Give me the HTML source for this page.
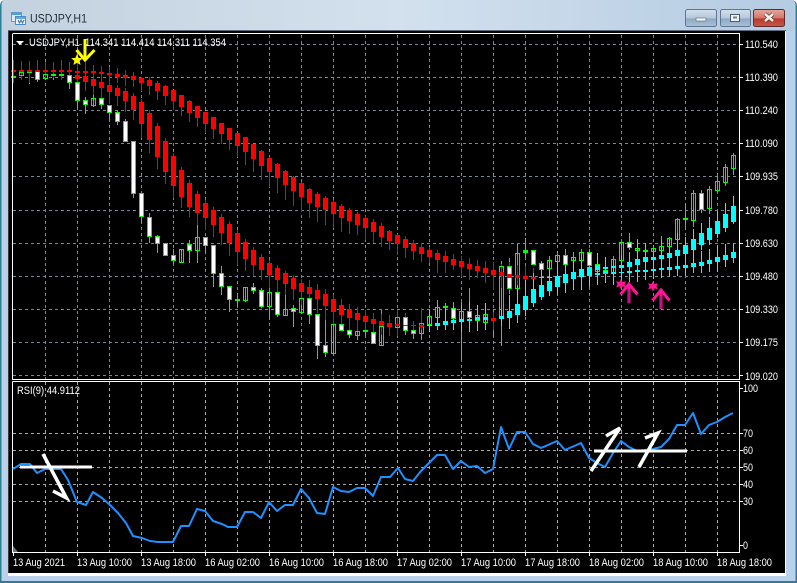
<!DOCTYPE html>
<html>
<head>
<meta charset="utf-8">
<title>USDJPY,H1</title>
<style>
html,body{margin:0;padding:0;background:#fff;width:797px;height:583px;overflow:hidden}
svg{display:block}
text{font-family:"Liberation Sans",sans-serif;font-size:11px;fill:#fff}
.c{shape-rendering:crispEdges;fill:none}
</style>
</head>
<body>
<svg width="797" height="583" viewBox="0 0 797 583" xmlns="http://www.w3.org/2000/svg">
<defs>
<linearGradient id="tb" x1="0" y1="0" x2="1" y2="0"><stop offset="0" stop-color="#c4d2df"/><stop offset=".5" stop-color="#d3e1ee"/><stop offset="1" stop-color="#b4cbe2"/></linearGradient>
<linearGradient id="bb" x1="0" y1="0" x2="0" y2="1"><stop offset="0" stop-color="#d3e0ec"/><stop offset=".5" stop-color="#b5c8db"/><stop offset=".55" stop-color="#8fa9c5"/><stop offset="1" stop-color="#a9c2da"/></linearGradient>
<linearGradient id="br" x1="0" y1="0" x2="0" y2="1"><stop offset="0" stop-color="#e6a79d"/><stop offset=".5" stop-color="#d4766a"/><stop offset=".55" stop-color="#b93a2c"/><stop offset="1" stop-color="#c8584a"/></linearGradient>
</defs>
<rect width="797" height="583" fill="#ffffff"/>
<path d="M0 583V6Q0 0 6 0H790Q797 0 797 6V583Z" fill="#2e7f8f"/>
<path d="M1.500 581V5Q1.500 0 6 0H790Q795.500 0 795.500 5V581Z" fill="#b9d1ea"/>
<rect x="3" y="0" width="791" height="31" fill="url(#tb)"/>
<rect x="8" y="31" width="778" height="545" fill="#fff"/>
<rect x="8" y="31" width="777" height="542" fill="#000"/>
<rect x="8" y="31" width="1" height="542" fill="#3a3a3a"/>
<rect x="8" y="30" width="778" height="1" fill="#5a6b7c"/>

<!-- title icon -->
<g shape-rendering="crispEdges">
<rect x="11.500" y="12.500" width="10" height="9" fill="#dceaf8" stroke="#5b9bd5"/>
<rect x="12" y="13" width="9" height="2" fill="#5b9bd5"/>
<rect x="15.500" y="16.500" width="10" height="8" fill="#eef5fc" stroke="#4a8bc8"/>
<rect x="16" y="17" width="9" height="2" fill="#6aa7dc"/>
</g>
<path d="M18 20l1.500 3 1.500-3 1.500 3 1.500-3" fill="none" stroke="#356fa8" stroke-width="1"/>
<text x="30" y="22.500" textLength="57" lengthAdjust="spacingAndGlyphs" style="fill:#1f2b38;font-size:12px">USDJPY,H1</text>

<!-- window buttons -->
<rect x="685.500" y="9.500" width="31" height="17" rx="2" fill="url(#bb)" stroke="#5f7590"/>
<rect x="696" y="18" width="10" height="3" fill="#f3f6f9" stroke="#56657a" stroke-width=".6"/>
<rect x="720.500" y="9.500" width="30" height="17" rx="2" fill="url(#bb)" stroke="#5f7590"/>
<rect x="730.500" y="14.500" width="9" height="7" fill="#eef2f6" stroke="#4c5b70"/>
<rect x="733" y="16.500" width="4" height="2" fill="#6d7f96"/>
<rect x="753.500" y="9.500" width="31" height="17" rx="2" fill="url(#br)" stroke="#5e2b2e"/>
<path d="M765 14l8 7M773 14l-8 7" stroke="#50302f" stroke-width="4"/>
<path d="M765 14l8 7M773 14l-8 7" stroke="#f4ecea" stroke-width="2.600"/>

<!-- grids -->
<g class="c" stroke="#778899" stroke-dasharray="3 3">
<path d="M13 44.500H739M13 77.500H739M13 110.500H739M13 143.500H739M13 176.500H739M13 210.500H739M13 243.500H739M13 276.500H739M13 309.500H739M13 342.500H739M13 375.500H739"/>
<path d="M45.500 35V379M77.500 35V379M109.500 35V379M141.500 35V379M173.500 35V379M205.500 35V379M237.500 35V379M269.500 35V379M301.500 35V379M333.500 35V379M365.500 35V379M397.500 35V379M429.500 35V379M461.500 35V379M493.500 35V379M525.500 35V379M557.500 35V379M589.500 35V379M621.500 35V379M653.500 35V379M685.500 35V379M717.500 35V379"/>
</g>
<g class="c" stroke="#a8a8a8" stroke-dasharray="3 3">
<path d="M13 433.500H739M13 450.500H739M13 467.500H739M13 484.500H739M13 501.500H739"/>
<path d="M45.500 382V552M77.500 382V552M109.500 382V552M141.500 382V552M173.500 382V552M205.500 382V552M237.500 382V552M269.500 382V552M301.500 382V552M333.500 382V552M365.500 382V552M397.500 382V552M429.500 382V552M461.500 382V552M493.500 382V552M525.500 382V552M557.500 382V552M589.500 382V552M621.500 382V552M653.500 382V552M685.500 382V552M717.500 382V552"/>
</g>

<!-- candles -->
<g class="c" transform="translate(.5,0)">
<!-- green wicks -->
<path stroke="#00ff00" d="M13 72V82M21 68V80M29 68V84M37 68V82M45 70V80M53 70V80M61 70V80M69 75V89M77 82V110M85 97V114M93 93V107M101 93V109M109 105V121M117 110V125M125 119V142M133 141V198M141 193V223M149 213V243M157 235V253M165 243V255M173 249V264M181 249V262M189 240V263M197 225V263M205 237V253M213 245V287M221 266V295M229 286V312M237 293V307M245 287V302M253 283V294M261 288V308M269 290V319M277 292V317M285 295V316M293 305V327M301 298V314M309 298V324M317 314V359M325 320V357M333 324V353M341 320V331M349 330V338M357 331V340M365 322V337M373 332V343M381 310V345M397 310V336M405 313V335M413 322V339M421 308V340M429 310V330M437 300V320M445 303V312M453 302V322M461 302V360M469 288V325M477 305V325M485 305V330M493 310V337M501 261V346M509 258V294M517 244V288M525 238V258M533 250V264M541 261V272M549 256V272M557 251V265M565 249V267M573 252V263M581 249V264M589 249V270M597 253V276M605 268V275M613 256V276M621 242V262M629 233V250M637 239V255M645 243V257M653 245V254M661 236V252M669 237V248M677 218V241M685 203V230M693 190V227M701 190V213M709 186V214M717 176V192M725 164V186M733 153V175"/>
<!-- red slow wicks -->
<path stroke="#ff0000" d="M13 60V83M21 61V80M29 61V83M37 60V80M45 62V78M53 62V78M61 60V80M69 62V80M77 62V80M85 62V85M93 65V85M101 66V83M109 67V85M117 68V83M125 70V86M133 72V87M141 77V91M149 77V95M157 81V100M165 85V105M173 90V110M181 95V116M189 100V122M197 106V127M205 112V133M213 117V139M221 123V144M229 128V150M237 133V157M245 137V165M253 144V172M261 150V180M269 157V187M277 163V193M285 170V200M293 176V206M301 182V212M309 188V218M317 192V222M325 196V225M333 200V228M341 204V232M349 208V234M357 212V235M365 216V240M373 219V243M381 223V247M389 230V250M397 234V255M405 236V258M413 240V260M421 243V262M429 247V263M437 250V273M445 251V273M453 254V270M461 256V277M469 258V280M477 260V278M485 261V283M493 262V290M501 264V288M509 262V290M517 265V288M525 266V290M533 268V290"/>
<!-- cyan slow wicks -->
<path stroke="#00ffff" d="M541 262V293M549 260V292M557 262V295M565 258V293M573 258V290M581 255V290M589 255V287M597 256V285M605 257V283M613 260V285M621 255V287M629 252V282M637 246V282M645 250V280M653 253V279M661 246V278M669 243V277M677 240V276M685 237V276M693 248V273M701 251V273M709 249V272M717 245V272M725 244V267M733 243V263"/>
<!-- red fast wicks -->
<path stroke="#ff0000" d="M77 72V88M85 73V91M93 76V95M101 78V99M109 82V104M117 85V106M125 88V112M133 93V120M141 99V138M149 110V153M157 123V169M165 138V184M173 153V198M181 167V208M189 180V217M197 191V225M205 200V230M213 207V237M221 214V245M229 221V256M237 230V265M245 239V271M253 247V276M261 254V280M269 260V288M277 265V292M285 271V295M293 275V300M301 279V305M309 280V306M317 284V313M325 289V320M333 295V325M341 299V325M349 304V330M357 307V331M365 310V331M373 313V335M381 314V335M389 315V336M397 310V336M405 313V330M413 321V330M421 308V330M493 312V330"/>
<!-- cyan fast wicks -->
<path stroke="#00ffff" d="M429 310V332M437 305V330M445 307V330M453 306V330M461 305V332M469 302V332M477 305V331M485 303V330M501 310V326M509 295V329M517 285V323M525 280V316M533 273V307M541 277V300M549 278V296M557 266V292M565 266V290M573 262V288M581 260V287M589 258V284M597 253V282M605 257V278M613 262V275M621 255V276M629 252V272M637 240V272M645 243V270M653 248V266M661 240V264M669 240V262M677 233V260M685 237V258M693 229V254M701 223V250M709 217V245M717 211V238M725 203V232M733 196V224"/>
<!-- green solid dashes -->
<path stroke="#00ff00" stroke-width="5" d="M13 76V78M29 70V73M53 74V76M61 74V76M237 299V301M365 330V332M445 306V308M525 250V253M645 250V252M685 218V220"/>
</g>
<!-- white bodies -->
<g class="c" transform="translate(.5,.5)" stroke="#00ff00" style="fill:#fff">
<rect x="35" y="71" width="4" height="8" fill="#fff"/><rect x="67" y="75" width="4" height="7" fill="#fff"/><rect x="75" y="82" width="4" height="18" fill="#fff"/><rect x="83" y="100" width="4" height="4" fill="#fff"/><rect x="99" y="98" width="4" height="6" fill="#fff"/><rect x="107" y="105" width="4" height="7" fill="#fff"/><rect x="115" y="112" width="4" height="9" fill="#fff"/><rect x="123" y="121" width="4" height="20" fill="#fff"/><rect x="131" y="141" width="4" height="52" fill="#fff"/><rect x="139" y="193" width="4" height="23" fill="#fff"/><rect x="147" y="217" width="4" height="19" fill="#fff"/><rect x="155" y="236" width="4" height="7" fill="#fff"/><rect x="163" y="243" width="4" height="12" fill="#fff"/><rect x="171" y="255" width="4" height="5" fill="#fff"/><rect x="187" y="244" width="4" height="6" fill="#fff"/><rect x="203" y="237" width="4" height="8" fill="#fff"/><rect x="211" y="245" width="4" height="28" fill="#fff"/><rect x="219" y="273" width="4" height="13" fill="#fff"/><rect x="227" y="286" width="4" height="13" fill="#fff"/><rect x="251" y="287" width="4" height="3" fill="#fff"/><rect x="259" y="290" width="4" height="16" fill="#fff"/><rect x="275" y="292" width="4" height="22" fill="#fff"/><rect x="291" y="308" width="4" height="3" fill="#fff"/><rect x="307" y="298" width="4" height="16" fill="#fff"/><rect x="315" y="314" width="4" height="31" fill="#fff"/><rect x="323" y="345" width="4" height="7" fill="#fff"/><rect x="339" y="324" width="4" height="6" fill="#fff"/><rect x="347" y="330" width="4" height="4" fill="#fff"/><rect x="371" y="332" width="4" height="11" fill="#fff"/><rect x="403" y="317" width="4" height="13" fill="#fff"/><rect x="411" y="330" width="4" height="3" fill="#fff"/><rect x="451" y="308" width="4" height="10" fill="#fff"/><rect x="467" y="311" width="4" height="6" fill="#fff"/><rect x="507" y="266" width="4" height="22" fill="#fff"/><rect x="531" y="250" width="4" height="14" fill="#fff"/><rect x="539" y="263" width="4" height="6" fill="#fff"/><rect x="563" y="255" width="4" height="9" fill="#fff"/><rect x="587" y="252" width="4" height="13" fill="#fff"/><rect x="627" y="242" width="4" height="5" fill="#fff"/><rect x="699" y="193" width="4" height="16" fill="#fff"/>
</g>
<!-- hollow bodies -->
<g class="c" transform="translate(.5,.5)" stroke="#00ff00">
<rect x="19" y="72" width="4" height="3"/><rect x="43" y="74" width="4" height="4"/><rect x="91" y="98" width="4" height="7"/><rect x="179" y="249" width="4" height="13"/><rect x="195" y="237" width="4" height="13"/><rect x="243" y="287" width="4" height="13"/><rect x="267" y="292" width="4" height="14"/><rect x="283" y="309" width="4" height="6"/><rect x="299" y="298" width="4" height="14"/><rect x="331" y="324" width="4" height="29"/><rect x="355" y="331" width="4" height="4"/><rect x="379" y="326" width="4" height="19"/><rect x="395" y="317" width="4" height="10"/><rect x="419" y="323" width="4" height="10"/><rect x="427" y="316" width="4" height="8"/><rect x="435" y="307" width="4" height="10"/><rect x="459" y="311" width="4" height="9"/><rect x="475" y="315" width="4" height="5"/><rect x="483" y="314" width="4" height="8"/><rect x="499" y="266" width="4" height="51"/><rect x="515" y="253" width="4" height="35"/><rect x="547" y="260" width="4" height="8"/><rect x="555" y="255" width="4" height="6"/><rect x="571" y="257" width="4" height="3"/><rect x="579" y="252" width="4" height="8"/><rect x="595" y="264" width="4" height="7"/><rect x="603" y="270" width="4" height="3"/><rect x="611" y="259" width="4" height="14"/><rect x="619" y="242" width="4" height="18"/><rect x="635" y="248" width="4" height="2"/><rect x="651" y="248" width="4" height="3"/><rect x="659" y="246" width="4" height="4"/><rect x="667" y="238" width="4" height="8"/><rect x="675" y="219" width="4" height="20"/><rect x="691" y="193" width="4" height="27"/><rect x="707" y="189" width="4" height="19"/><rect x="715" y="181" width="4" height="9"/><rect x="723" y="167" width="4" height="15"/><rect x="731" y="155" width="4" height="13"/>
</g>
<g class="c" transform="translate(.5,0)" stroke-width="5">
<!-- slow red -->
<path stroke="#ff0000" d="M13 70V72M21 70V72M29 70V72M37 70V72M45 70V72M53 70V72M61 70V72M69 70V72M77 71V73M85 71V73M93 71V73M101 72V74M109 73V75M117 74V77M125 75V78M133 76V80M141 78V83M149 80V86M157 83V91M165 86V96M173 90V101M181 95V107M189 101V113M197 106V118M205 112V124M213 117V129M221 123V134M229 128V140M237 133V146M245 137V152M253 144V159M261 151V166M269 158V172M277 164V178M285 171V185M293 177V191M301 183V197M309 189V203M317 194V207M325 198V210M333 202V214M341 206V218M349 210V221M357 214V225M365 218V228M373 222V232M381 226V237M389 231V241M397 235V244M405 239V248M413 243V251M421 247V254M429 250V257M437 253V260M445 256V262M453 259V265M461 261V267M469 264V269M477 266V271M485 268V273M493 270V275M501 272V276M509 274V278M517 275V278M525 276V279M533 277V279"/>
<!-- slow cyan -->
<path stroke="#00ffff" d="M541 277V278M549 277V278M557 276V278M565 276V278M573 275V277M581 275V277M589 274V276M597 273V275M605 271V273M613 272V274M621 272V273M629 271V273M637 270V272M645 270V272M653 269V271M661 268V270M669 267V270M677 266V269M685 265V268M693 263V267M701 262V266M709 260V264M717 257V262M725 255V260M733 252V258"/>
<!-- fast red -->
<path stroke="#ff0000" d="M77 75V79M85 76V82M93 79V86M101 82V88M109 85V92M117 88V96M125 91V101M133 96V110M141 102V124M149 113V140M157 126V157M165 141V172M173 156V186M181 170V197M189 183V207M197 194V213M205 203V218M213 210V225M221 217V233M229 224V243M237 233V252M245 242V259M253 250V265M261 257V270M269 263V275M277 268V280M285 273V284M293 278V289M301 283V292M309 287V294M317 290V299M325 294V306M333 299V312M341 305V315M349 309V318M357 313V320M365 316V322M373 319V324M381 321V326M389 323V327M397 324V326M405 325V326M413 325V326M421 325V327M493 318V321"/>
<!-- fast cyan -->
<path stroke="#00ffff" d="M429 325V326M437 323V326M445 321V325M453 320V323M461 319V322M469 319V321M477 317V320M485 317V320M501 316V319M509 311V318M517 304V315M525 296V310M533 289V303M541 285V297M549 281V291M557 276V287M565 274V283M573 272V279M581 269V276M589 267V276M597 265V270M605 267V269M613 266V268M621 265V268M629 262V267M637 259V265M645 257V262M653 257V260M661 255V259M669 253V258M677 250V256M685 245V254M693 239V250M701 233V245M709 228V240M717 221V234M725 214V228M733 206V222"/>
</g>

<!-- frames -->
<g class="c" stroke="#fff">
<path d="M12.500 34V379.500H739.500V33.500H12.500"/>
<path d="M12.500 381.500V552.500H739.500V381.500H12.500"/>
<path d="M740 44.500H743M740 77.500H743M740 110.500H743M740 143.500H743M740 176.500H743M740 210.500H743M740 243.500H743M740 276.500H743M740 309.500H743M740 342.500H743M740 375.500H743"/>
<path d="M740 388.500H743M740 433.500H743M740 450.500H743M740 467.500H743M740 484.500H743M740 501.500H743M740 545.500H743"/>
<path d="M13.500 553V556M77.500 553V556M141.500 553V556M205.500 553V556M269.500 553V556M333.500 553V556M397.500 553V556M461.500 553V556M525.500 553V556M589.500 553V556M653.500 553V556M717.500 553V556"/>
</g>
<path d="M13 546L18 552H13Z" fill="#6e767e"/>

<!-- RSI -->
<polyline fill="none" stroke="#1e90ff" stroke-width="2" stroke-linejoin="round" points="13,469 21,464 30,464 37,473 45,469 53,469 61,469 68,480 77,502 86,505 93,492 102,498 109,504 118,513 126,523 133,536 142,538 150,541 158,542 173,542 181,526 189,526 197,509 205,511 213,521 222,524 228,527 237,527 245,512 253,512 261,518 269,502 277,511 285,505 293,505 301,489 309,498 317,513 325,514 333,487 341,491 349,492 357,488 365,488 373,496 381,477 390,477 398,468 405,479 413,481 421,471 429,463 437,455 445,455 453,469 461,461 469,467 477,466 485,473 493,469 501,427 509,449 517,432 525,432 533,444 541,448 557,441 565,450 581,443 589,458 597,463 605,467 613,453 621,441 629,447 637,451 653,449 661,447 669,439 677,425 685,425 693,413 701,434 709,425 717,422 725,417 733,413"/>

<!-- RSI drawings -->
<path d="M20 467H92" stroke="#fff" stroke-width="3"/>
<path d="M43 454L66.500 498L53 491" fill="none" stroke="#fff" stroke-width="3.500"/>
<path d="M594 451H687" stroke="#fff" stroke-width="3"/>
<path d="M591 471L620 428L606 436" fill="none" stroke="#fff" stroke-width="3.500"/>
<path d="M639 467L658 433L645 438" fill="none" stroke="#fff" stroke-width="3.500"/>

<!-- yellow arrow + star -->
<path d="M85 39V60M76.500 50L85 60L94.500 50" fill="none" stroke="#ffff00" stroke-width="3"/>
<path d="M77 54l1.600 3.900 4.200.300-3.200 2.700 1 4.100-3.600-2.200-3.600 2.200 1-4.100-3.200-2.700 4.200-.300z" fill="#ffff00"/>

<!-- magenta arrows + stars -->
<path d="M629 303V284M620.500 294.500L629 284L637.500 294.500" fill="none" stroke="#ff1493" stroke-width="3"/>
<path d="M661 309V290M652.500 300.500L661 290L669.500 300.500" fill="none" stroke="#ff1493" stroke-width="3"/>
<path d="M629 303V290M661 309V296" stroke="#c0108f" stroke-width="2"/>
<path d="M621 279l1.500 3 3.400-.800-1.400 3 1.400 3-3.400-.800-1.500 3-1.500-3-3.400.800 1.400-3-1.400-3 3.400.800z" fill="#ff1493"/>
<path d="M653 281l1.500 3 3.400-.800-1.400 3 1.400 3-3.400-.800-1.500 3-1.500-3-3.400.800 1.400-3-1.400-3 3.400.800z" fill="#ff1493"/>

<!-- labels -->
<path d="M16 41H24L20 45Z" fill="#fff"/>
<text x="29" y="46" textLength="197" lengthAdjust="spacingAndGlyphs" xml:space="preserve">USDJPY,H1  114.341 114.414 114.311 114.354</text>
<text x="17" y="394" textLength="63" lengthAdjust="spacingAndGlyphs">RSI(9) 44.9112</text>

<g>
<text x="745" y="48" textLength="33" lengthAdjust="spacingAndGlyphs">110.540</text>
<text x="745" y="81" textLength="33" lengthAdjust="spacingAndGlyphs">110.390</text>
<text x="745" y="114" textLength="33" lengthAdjust="spacingAndGlyphs">110.240</text>
<text x="745" y="147" textLength="33" lengthAdjust="spacingAndGlyphs">110.090</text>
<text x="745" y="180" textLength="33" lengthAdjust="spacingAndGlyphs">109.935</text>
<text x="745" y="214" textLength="33" lengthAdjust="spacingAndGlyphs">109.780</text>
<text x="745" y="247" textLength="33" lengthAdjust="spacingAndGlyphs">109.630</text>
<text x="745" y="280" textLength="33" lengthAdjust="spacingAndGlyphs">109.480</text>
<text x="745" y="313" textLength="33" lengthAdjust="spacingAndGlyphs">109.330</text>
<text x="745" y="346" textLength="33" lengthAdjust="spacingAndGlyphs">109.175</text>
<text x="745" y="380" textLength="33" lengthAdjust="spacingAndGlyphs">109.020</text>
<text x="743" y="392" textLength="15" lengthAdjust="spacingAndGlyphs">100</text>
<text x="743" y="437" textLength="10" lengthAdjust="spacingAndGlyphs">70</text>
<text x="743" y="454" textLength="10" lengthAdjust="spacingAndGlyphs">60</text>
<text x="743" y="471" textLength="10" lengthAdjust="spacingAndGlyphs">50</text>
<text x="743" y="488" textLength="10" lengthAdjust="spacingAndGlyphs">40</text>
<text x="743" y="505" textLength="10" lengthAdjust="spacingAndGlyphs">30</text>
<text x="743" y="549" textLength="5" lengthAdjust="spacingAndGlyphs">0</text>
<text x="13" y="566" textLength="52" lengthAdjust="spacingAndGlyphs">13 Aug 2021</text>
<text x="77" y="566" textLength="55" lengthAdjust="spacingAndGlyphs">13 Aug 10:00</text>
<text x="141" y="566" textLength="55" lengthAdjust="spacingAndGlyphs">13 Aug 18:00</text>
<text x="205" y="566" textLength="55" lengthAdjust="spacingAndGlyphs">16 Aug 02:00</text>
<text x="269" y="566" textLength="55" lengthAdjust="spacingAndGlyphs">16 Aug 10:00</text>
<text x="333" y="566" textLength="55" lengthAdjust="spacingAndGlyphs">16 Aug 18:00</text>
<text x="397" y="566" textLength="55" lengthAdjust="spacingAndGlyphs">17 Aug 02:00</text>
<text x="461" y="566" textLength="55" lengthAdjust="spacingAndGlyphs">17 Aug 10:00</text>
<text x="525" y="566" textLength="55" lengthAdjust="spacingAndGlyphs">17 Aug 18:00</text>
<text x="589" y="566" textLength="55" lengthAdjust="spacingAndGlyphs">18 Aug 02:00</text>
<text x="653" y="566" textLength="55" lengthAdjust="spacingAndGlyphs">18 Aug 10:00</text>
<text x="717" y="566" textLength="55" lengthAdjust="spacingAndGlyphs">18 Aug 18:00</text>
</g>
</svg>
</body>
</html>
